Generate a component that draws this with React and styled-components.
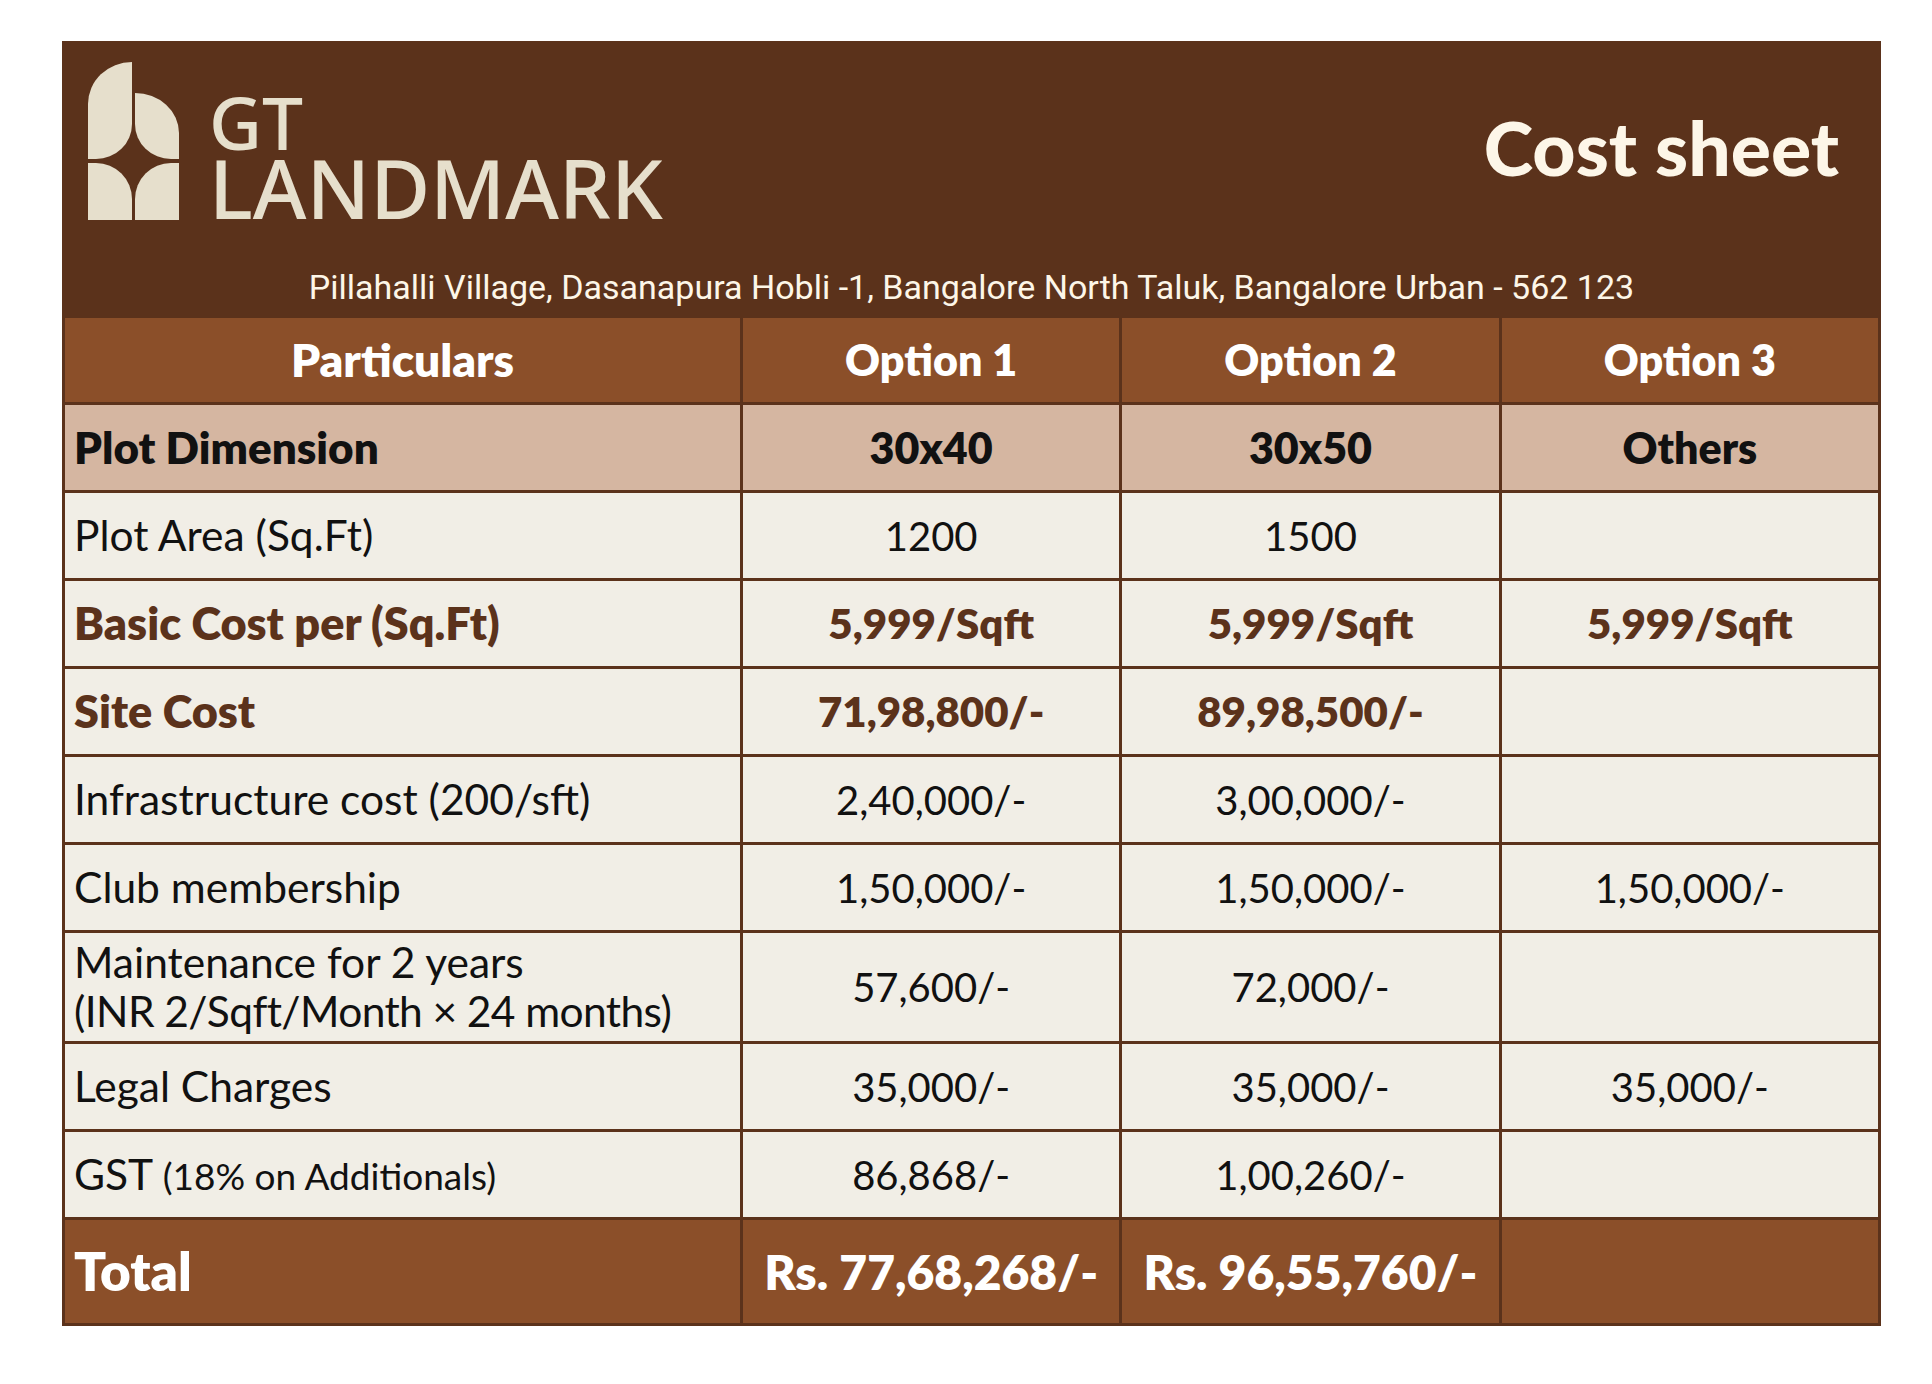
import React from "react";
import styled, { createGlobalStyle } from "styled-components";

const DARK = "#5b321b";
const RUST = "#8b4f29";
const SAND = "#d5b6a1";
const PAPER = "#f1eee6";
const CREAM = "#e6dfcc";

const ROWS = [
  { kind: "dim", label: "Plot Dimension", values: ["30x40", "30x50", "Others"] },
  { label: "Plot Area (Sq.Ft)", values: ["1200", "1500", ""] },
  { kind: "accent", label: "Basic Cost per (Sq.Ft)", values: ["5,999/Sqft", "5,999/Sqft", "5,999/Sqft"] },
  { kind: "accent", label: "Site Cost", values: ["71,98,800/-", "89,98,500/-", ""] },
  { label: "Infrastructure cost (200/sft)", values: ["2,40,000/-", "3,00,000/-", ""] },
  { label: "Club membership", values: ["1,50,000/-", "1,50,000/-", "1,50,000/-"] },
  {
    label: ["Maintenance for 2 years", "(INR 2/Sqft/Month × 24 months)"],
    values: ["57,600/-", "72,000/-", ""],
    tall: true,
  },
  { label: "Legal Charges", values: ["35,000/-", "35,000/-", "35,000/-"] },
  { label: "GST", note: "(18% on Additionals)", values: ["86,868/-", "1,00,260/-", ""] },
];

const GlobalStyle = createGlobalStyle`
  body {
    margin: 0;
    background: #ffffff;
    font-family: "Lato", "Noto Sans", sans-serif;
  }
`;

const Page = styled.div`
  padding: 41px 0 0 62px;
`;

const Sheet = styled.div`
  width: 1819px;
  box-sizing: border-box;
`;

const Header = styled.header`
  background: ${DARK};
  height: 277px;
  display: flex;
  flex-direction: column;
`;

const TopBar = styled.div`
  display: flex;
  align-items: flex-start;
  justify-content: space-between;
  padding: 21px 42px 0 26px;
  height: 179px;
  box-sizing: border-box;
`;

const Brand = styled.div`
  display: flex;
  align-items: flex-start;
  gap: 29px;
`;

const Wordmark = styled.div`
  display: flex;
  flex-direction: column;
  gap: 9px;
  margin-top: 34px;
  color: ${CREAM};
  font-family: "Noto Sans", sans-serif;
  font-weight: 500;
`;

const WordLine = styled.span`
  font-size: ${({ $size }) => $size}px;
  line-height: 0.72;
`;

const Title = styled.h1`
  margin: 0;
  padding-top: 48px;
  font-family: "Lato", sans-serif;
  font-weight: 900;
  font-size: 75px;
  line-height: 1;
  color: #fdf6e8;
`;

const Address = styled.div`
  flex: 1;
  display: flex;
  align-items: center;
  justify-content: center;
  padding-top: 36px;
  color: #fdf6e8;
  font-family: "Roboto", sans-serif;
  font-size: 34px;
`;

const Table = styled.div`
  display: grid;
  grid-template-columns: 675px repeat(3, 1fr);
  gap: 3px;
  background: ${DARK};
  border: 3px solid ${DARK};
  border-top: 0;
`;

const Cell = styled.div`
  display: flex;
  flex-direction: column;
  justify-content: center;
  align-items: ${({ $first }) => ($first ? "flex-start" : "center")};
  padding: 0 ${({ $first }) => ($first ? "9px" : "4px")};
  height: ${({ $h }) => $h}px;
  font-size: ${({ $size }) => $size}px;
  font-weight: ${({ $bold }) => ($bold ? 800 : 400)};
  color: ${({ $color }) => $color};
  background: ${({ $bg }) => $bg};
  line-height: 1.15;
  white-space: nowrap;
`;

const LabelLine = styled.span`
  letter-spacing: ${({ $tight }) => ($tight ? "-0.6px" : "normal")};
`;

const Note = styled.span`
  font-size: 37px;
`;

const LogoMark = () => (
  <svg width="92" height="158" viewBox="0 0 92 158">
    <g fill={CREAM}>
      <path d="M44 0 L44 62 A36 35 0 0 1 8 97 L0 97 L0 42 A44 42 0 0 1 44 0 Z" />
      <path d="M47 31 A44 40 0 0 1 91 71 L91 97 L83 97 A36 35 0 0 1 47 62 Z" />
      <path d="M0 101 L8 101 A36 36 0 0 1 44 137 L44 158 L0 158 Z" />
      <path d="M91 101 L91 158 L47 158 L47 137 A36 36 0 0 1 83 101 Z" />
    </g>
  </svg>
);

const rowStyle = (row) => {
  if (row.kind === "dim") return { bg: SAND, color: "#111", bold: true, label: 44, value: 43 };
  if (row.kind === "accent") return { bg: PAPER, color: DARK, bold: true, label: 45, value: 42 };
  return { bg: PAPER, color: "#111", bold: false, label: 42.5, value: 40 };
};

const App = () => (
  <>
    <GlobalStyle />
    <Page>
      <Sheet>
        <Header>
          <TopBar>
            <Brand>
              <LogoMark />
              <Wordmark>
                <WordLine $size={73}>GT</WordLine>
                <WordLine $size={82}>LANDMARK</WordLine>
              </Wordmark>
            </Brand>
            <Title>Cost sheet</Title>
          </TopBar>
          <Address>
            Pillahalli Village, Dasanapura Hobli -1, Bangalore North Taluk, Bangalore Urban - 562 123
          </Address>
        </Header>
        <Table>
          {["Particulars", "Option 1", "Option 2", "Option 3"].map((h, i) => (
            <Cell key={h} $h={84} $size={i === 0 ? 46 : 43} $bold $color="#fff" $bg={RUST}>
              {h}
            </Cell>
          ))}
          {ROWS.map((row, i) => {
            const s = rowStyle(row);
            const h = row.tall ? 108 : 85;
            return (
              <React.Fragment key={i}>
                <Cell $first $h={h} $size={s.label} $bold={s.bold} $color={s.color} $bg={s.bg}>
                  {Array.isArray(row.label)
                    ? row.label.map((l, k) => (
                        <LabelLine key={l} $tight={k > 0}>
                          {l}
                        </LabelLine>
                      ))
                    : (
                      <span>
                        {row.label}
                        {row.note && <Note> {row.note}</Note>}
                      </span>
                    )}
                </Cell>
                {row.values.map((v, j) => (
                  <Cell key={j} $h={h} $size={s.value} $bold={s.bold} $color={s.color} $bg={s.bg}>
                    {v}
                  </Cell>
                ))}
              </React.Fragment>
            );
          })}
          <Cell $first $h={103} $size={53} $bold $color="#fff" $bg={RUST}>
            Total
          </Cell>
          <Cell $h={103} $size={48} $bold $color="#fff" $bg={RUST}>
            Rs. 77,68,268/-
          </Cell>
          <Cell $h={103} $size={48} $bold $color="#fff" $bg={RUST}>
            Rs. 96,55,760/-
          </Cell>
          <Cell $h={103} $bold $color="#fff" $bg={RUST} />
        </Table>
      </Sheet>
    </Page>
  </>
);

export default App;
